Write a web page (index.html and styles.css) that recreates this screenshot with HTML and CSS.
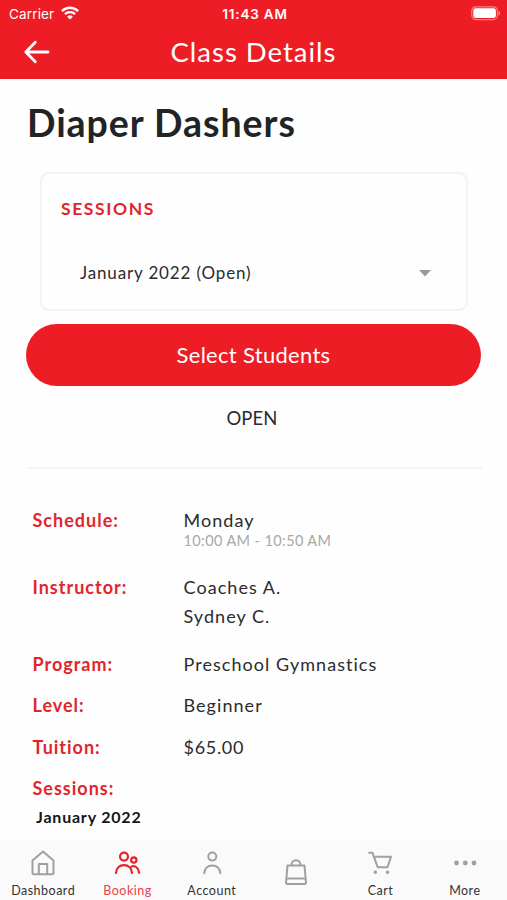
FILE: index.html
```html
<!DOCTYPE html>
<html lang="en">
<head>
<meta charset="utf-8">
<title>Class Details</title>
<link rel="stylesheet" href="styles.css">
</head>
<body>
<div class="screen">
  <header class="header">
    <div class="status">
      <div class="carrier"><span class="carrier-name">Carrier</span>
        <svg class="wifi" width="18" height="14" viewBox="0 0 18 14" fill="none" stroke="#fff" stroke-width="2.4"><path d="M.9 5.1a11.6 11.6 0 0 1 16.2 0M3.9 8.2a7.3 7.3 0 0 1 10.2 0"/><path d="M9 13.6 6.1 10.7a4.1 4.1 0 0 1 5.8 0Z" fill="#fff" stroke="none"/></svg>
      </div>
      <div class="clock">11:43 AM</div>
      <svg class="battery" width="30" height="15" viewBox="0 0 30 15"><rect x=".8" y=".8" width="25.6" height="12.8" rx="4" fill="none" stroke="#fff" stroke-opacity=".45" stroke-width="1.2"/><rect x="2.3" y="2.3" width="22.6" height="9.8" rx="2.4" fill="#fff"/><path d="M27.6 5v4.6c2-.7 2-3.900 0-4.600Z" fill="#fff" fill-opacity=".5"/></svg>
    </div>
    <div class="titlebar">
      <svg class="back" width="28" height="24" viewBox="0 0 28 24" fill="none" stroke="#fff" stroke-width="2.8" stroke-linecap="round" stroke-linejoin="round"><path d="M12.300 2.300 2.800 12l9.500 9.700M3.300 12H25"/></svg>
      <h1 class="page-title">Class Details</h1>
    </div>
  </header>
  <main class="content">
    <h2 class="class-name">Diaper Dashers</h2>
    <section class="card">
      <h3 class="card-title">SESSIONS</h3>
      <div class="select"><span class="select-value">January 2022 (Open)</span>
        <svg width="12" height="7" viewBox="0 0 12 7"><path d="M0 0h12L6 6.500Z" fill="#999"/></svg>
      </div>
    </section>
    <button class="primary"><span>Select Students</span></button>
    <p class="availability"><span>OPEN</span></p>
    <dl class="details">
      <div class="row schedule"><dt><span>Schedule:</span></dt><dd><span>Monday</span><small class="time">10:00 AM - 10:50 AM</small></dd></div>
      <div class="row instructor"><dt><span>Instructor:</span></dt><dd><span>Coaches A.</span><span>Sydney C.</span></dd></div>
      <div class="row"><dt><span>Program:</span></dt><dd><span>Preschool Gymnastics</span></dd></div>
      <div class="row"><dt><span>Level:</span></dt><dd><span>Beginner</span></dd></div>
      <div class="row"><dt><span>Tuition:</span></dt><dd><span class="price">$65.00</span></dd></div>
      <div class="row last"><dt><span>Sessions:</span></dt></div>
    </dl>
    <p class="session"><span>January 2022</span></p>
  </main>
  <nav class="tabs">
    <a class="tab"><svg width="28" height="28" viewBox="0 0 28 28"><path d="M3.500 11.500 14 2.500l10.500 9v12.200a1.500 1.500 0 0 1-1.500 1.500H5a1.500 1.500 0 0 1-1.500-1.500ZM9.800 25V15h8.400v10"/></svg><span>Dashboard</span></a>
    <a class="tab active"><svg width="28" height="28" viewBox="0 0 28 28"><circle cx="11" cy="7.600" r="4"/><circle cx="20.800" cy="11" r="2.700"/><path d="M3 24c.3-4.800 3.500-7.800 8-7.800s7.700 3 8 7.800M18.600 17.500c4-1.200 7.200 1.700 7.500 6.300"/></svg><span>Booking</span></a>
    <a class="tab"><svg width="28" height="28" viewBox="0 0 28 28"><circle cx="14.300" cy="7.600" r="4"/><path d="M6.300 24.200c.3-4.800 3.500-7.700 8-7.700s7.700 2.900 8 7.700"/></svg><span>Account</span></a>
    <a class="tab bag"><svg width="28" height="28" viewBox="0 0 28 28"><path d="M5.500 7.500h17l1.500 17.200a1.200 1.200 0 0 1-1.200 1.300H5.200A1.200 1.200 0 0 1 4 24.700ZM4.600 20.500h18.800M9.500 7.300c0-6.800 9-6.800 9 0"/></svg></a>
    <a class="tab"><svg width="28" height="28" viewBox="0 0 28 28"><path d="M3.200 3.700h3.200l5.300 14.500h9.800l3.500-10.500H8.300"/><path d="M9.300 23.300h.01M21.500 23.300h.01" stroke-width="3.600"/></svg><span>Cart</span></a>
    <a class="tab"><svg width="28" height="28" viewBox="0 0 28 28"><g fill="#a0a0a0" stroke="none"><circle cx="5.500" cy="14" r="2.400"/><circle cx="14.300" cy="14" r="2.400"/><circle cx="23" cy="14" r="2.400"/></g></svg><span>More</span></a>
  </nav>
</div>
</body>
</html>
```

FILE: styles.css
```css
* { box-sizing: border-box; margin: 0; padding: 0; }
body { background: #fff; font-family: Lato, "Open Sans", sans-serif; color: #2b2b2d; }
.screen { width: 507px; height: 900px; display: flex; flex-direction: column; overflow: hidden; background: #fefefe; }

.header { height: 79px; flex: none; background: #ee1d25; color: #fff; }
.status { height: 26px; display: grid; grid-template-columns: 1fr auto 1fr; align-items: center; padding: 0 6px 0 9px; font-family: Inter, sans-serif; font-size: 13px; }
.carrier { display: flex; align-items: center; gap: 6px; padding-top: 1px; }
.carrier-name { font-size: 13.500px; letter-spacing: .15px; }
.wifi { margin: -2px 0 0 1px; }
.clock { font-size: 13.500px; font-weight: 600; padding-top: 2px; letter-spacing: .8px; }
.battery { justify-self: end; margin-top: 1px; }
.titlebar { height: 52px; display: grid; grid-template-columns: 60px 1fr 60px; align-items: center; }
.back { margin-left: 23px; }
.page-title { font-size: 27.500px; font-weight: 400; line-height: 34px; text-align: center; letter-spacing: 1px; }

.content { flex: 1; display: flex; flex-direction: column; padding: 20px 26px 0; }
.class-name { margin-left: 1px; font-size: 37.500px; line-height: 48px; font-weight: 700; letter-spacing: .95px; color: #222325; }
.card { margin: 25px 13px 0 14px; height: 139px; border: 2px solid #f3f3f3; border-radius: 9px; padding: 23px 35px 0 19px; }
.card-title { font-size: 17.500px; line-height: 24px; letter-spacing: 1.600px; color: #e2252d; }
.select { display: flex; align-items: center; justify-content: space-between; margin: 40px 0 0 19px; font-size: 17px; line-height: 24px; letter-spacing: .85px; }
.primary { margin: 13px 0 0; height: 62px; border: 0; border-radius: 31px; background: #ee1d25; color: #fff; font: 400 22px/28px Lato, sans-serif; letter-spacing: .3px; }
.availability { font-size: 18.500px; line-height: 24px; text-align: center; padding: 20px 6px 37px 0; border-bottom: 2px solid #f4f4f4; margin: 0 -1px 0 2px; letter-spacing: .1px; }
.details { margin: 39.500px 0 0 6.500px; font-size: 18px; line-height: 22px; letter-spacing: 1.050px; }
.row { display: grid; grid-template-columns: 151px 1fr; margin-bottom: 19.500px; }
dt { color: #e2252d; font-weight: 700; letter-spacing: 1px; }
dd { display: flex; flex-direction: column; align-items: flex-start; }
.price { letter-spacing: .7px; }
.time { font-size: 14.500px; line-height: 20px; color: #a8a8a8; letter-spacing: .4px; }
.schedule { margin-bottom: 25px; }
.instructor dd { gap: 7.500px; }
.instructor { margin-bottom: 25.500px; }
.last { margin-bottom: 7px; }
.session { margin-left: 10px; font-size: 16px; line-height: 22px; font-weight: 700; color: #151515; letter-spacing: .8px; }

.tabs { height: 60px; flex: none; display: grid; grid-template-columns: repeat(6, 1fr); background: #fafafa; padding-left: 1px; }
.tab { display: flex; flex-direction: column; align-items: center; padding-top: 9px; font-size: 12.500px; line-height: 16px; letter-spacing: .5px; color: #333; }
.tab svg { fill: none; stroke: #a0a0a0; stroke-width: 2; stroke-linecap: round; stroke-linejoin: round; margin-bottom: 6px; }
.tab.bag { padding-top: 18px; }
.tab.active { color: #e84249; }
.tab.active svg { stroke: #e2252d; stroke-width: 2.200; }
```
